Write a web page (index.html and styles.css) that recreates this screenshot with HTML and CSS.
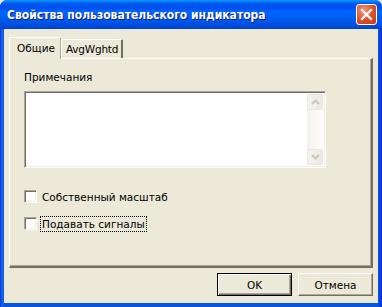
FILE: index.html
```html
<!DOCTYPE html>
<html lang="ru">
<head>
    <meta charset="UTF-8">
    <title>Свойства пользовательского индикатора</title>
    <link rel="stylesheet" href="styles.css">
</head>
<body>
    <div class="window">
        <div class="titlebar">
            <span class="title">Свойства пользовательского индикатора</span>
            <button class="close-btn" aria-label="Закрыть">
                <svg width="13" height="13" viewBox="0 0 13 13">
                    <path d="M2 2 L11 11 M11 2 L2 11" stroke="#fff" stroke-width="2.2" stroke-linecap="square"/>
                </svg>
            </button>
        </div>

        <div class="client">
            <div class="tabs">
                <div class="tab active">Общие</div>
                <div class="tab">AvgWghtd</div>
            </div>

            <div class="panel">
                <div class="field-label">Примечания</div>
                <div class="notes">
                    <div class="notes-text"></div>
                    <div class="scrollbar">
                        <div class="scroll-btn">
                            <svg width="9" height="6" viewBox="0 0 9 6"><path d="M1 5 L4.5 1.5 L8 5" fill="none" stroke="#c9c7ba" stroke-width="2"/></svg>
                        </div>
                        <div class="scroll-track"></div>
                        <div class="scroll-btn">
                            <svg width="9" height="6" viewBox="0 0 9 6"><path d="M1 1 L4.5 4.5 L8 1" fill="none" stroke="#c9c7ba" stroke-width="2"/></svg>
                        </div>
                    </div>
                </div>

                <label class="check">
                    <span class="box"></span>
                    <span>Собственный масштаб</span>
                </label>
                <label class="check">
                    <span class="box"></span>
                    <span class="focused">Подавать сигналы</span>
                </label>
            </div>

            <div class="buttons">
                <button class="button default">OK</button>
                <button class="button">Отмена</button>
            </div>
        </div>
    </div>
</body>
</html>
```

FILE: styles.css
```css
* {
    box-sizing: border-box;
}
body {
    margin: 0;
    padding: 0;
    background-color: #ece9d8;
    font-family: "DejaVu Sans", Tahoma, sans-serif;
    font-size: 10.5px;
    color: #000;
}
.window {
    width: 382px;
    height: 307px;
    display: flex;
    flex-direction: column;
    background: linear-gradient(to right, #0831d9 0, #166aee 2px, #0855dd 4px, #0855dd 378px, #0831d9 382px);
    border-radius: 7px 7px 0 0;
    overflow: hidden;
}
.titlebar {
    height: 29px;
    flex-shrink: 0;
    display: flex;
    align-items: center;
    justify-content: space-between;
    padding: 0 5px 0 7px;
    background: linear-gradient(to bottom, #0997ff 0, #0053ee 4px, #0050ee 8px, #06f 40%, #0058ee 70%, #0049d8 92%, #0042c8 100%);
}
.title {
    color: #fff;
    font-family: "DejaVu Sans Condensed", "DejaVu Sans", sans-serif;
    font-weight: bold;
    font-size: 12px;
    text-shadow: 1px 1px 0 #0a1e7a;
    padding-top: 1px;
}
.close-btn {
    width: 21px;
    height: 21px;
    padding: 0;
    border: 1px solid #fff;
    border-radius: 3px;
    background: radial-gradient(circle at 35% 30%, #f09a80 0, #dc4d27 55%, #c13b17 100%);
    display: flex;
    align-items: center;
    justify-content: center;
}
.client {
    flex: 1;
    margin: 0 4px 4px 4px;
    background-color: #ece9d8;
    padding: 8px 5px 0 5px;
    display: flex;
    flex-direction: column;
}
.tabs {
    display: flex;
    align-items: flex-end;
    height: 21px;
    position: relative;
    z-index: 1;
}
.tab {
    height: 19px;
    padding: 0 3px 0 4px;
    display: flex;
    align-items: center;
    border-top: 1px solid #fff;
    border-left: 1px solid #fff;
    border-right: 2px solid #716f64;
    border-radius: 2px 2px 0 0;
    background-color: #ece9d8;
    letter-spacing: -0.2px;
}
.tab.active {
    height: 22px;
    padding: 0 5px 1px 7px;
    margin-bottom: -1px;
    border-right: 1px solid #aca899;
    letter-spacing: 0;
}
.panel {
    height: 210px;
    border-top: 1px solid #fff;
    border-left: 1px solid #fff;
    border-right: 2px solid #716f64;
    border-bottom: 2px solid #716f64;
    box-shadow: inset -1px -1px 0 #aca899;
    padding: 11px 14px 0 14px;
}
.field-label {
    height: 15px;
    line-height: 15px;
}
.notes {
    margin-top: 6px;
    width: 302px;
    height: 77px;
    border-top: 1px solid #aca899;
    border-left: 1px solid #aca899;
    border-right: 1px solid #fff;
    border-bottom: 1px solid #fff;
    box-shadow: inset 1px 1px 0 #716f64, inset -1px -1px 0 #f1efe2;
    background-color: #fff;
    display: flex;
    padding: 2px;
}
.notes-text {
    flex: 1;
}
.scrollbar {
    width: 16px;
    display: flex;
    flex-direction: column;
    background: linear-gradient(to right, #f3f1ec, #fefefb);
}
.scroll-btn {
    height: 16px;
    border: 1px solid #e8e6dc;
    border-radius: 2px;
    background: linear-gradient(to right, #f4f3ee, #ebe9e0);
    display: flex;
    align-items: center;
    justify-content: center;
}
.scroll-track {
    flex: 1;
}
.check {
    display: flex;
    align-items: center;
    gap: 5px;
    height: 13px;
    margin-top: 14px;
}
.notes + .check {
    margin-top: 22px;
}
.box {
    width: 13px;
    height: 13px;
    border-top: 1px solid #aca899;
    border-left: 1px solid #aca899;
    border-right: 1px solid #fff;
    border-bottom: 1px solid #fff;
    box-shadow: inset 1px 1px 0 #716f64, inset -1px -1px 0 #f1efe2;
    background-color: #fff;
}
.focused {
    outline: 1px dotted #000;
    outline-offset: 1px;
}
.buttons {
    display: flex;
    justify-content: flex-end;
    gap: 6px;
    padding-top: 5px;
}
.button {
    width: 75px;
    height: 23px;
    font-family: "DejaVu Sans", Tahoma, sans-serif;
    font-size: 10.5px;
    color: #000;
    background-color: #ece9d8;
    border-top: 1px solid #fff;
    border-left: 1px solid #fff;
    border-right: 1px solid #716f64;
    border-bottom: 1px solid #716f64;
    box-shadow: inset -1px -1px 0 #aca899;
    padding: 0;
}
.button.default {
    border: 1px solid #000;
    box-shadow: inset 1px 1px 0 #fff, inset -1px -1px 0 #716f64, inset -2px -2px 0 #aca899;
}
```
